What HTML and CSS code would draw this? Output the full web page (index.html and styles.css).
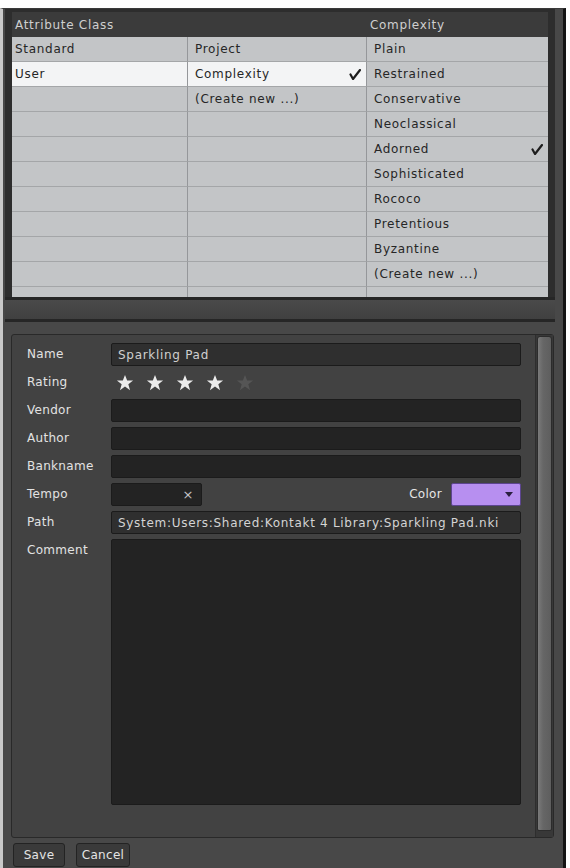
FILE: index.html
```html
<!DOCTYPE html>
<html>
<head>
<meta charset="utf-8">
<link rel="stylesheet" href="styles.css">
</head>
<body>
<div class="window">
  <div class="browser">
    <div class="bhead">
      <span class="hcell c1">Attribute Class</span>
      <span class="hcell c2"></span>
      <span class="hcell c3">Complexity</span>
    </div>
    <div class="grid">
      <div class="cell c1">Standard</div><div class="cell c2">Project</div><div class="cell c3">Plain</div>
      <div class="cell c1 sel">User</div><div class="cell c2 sel">Complexity<svg class="check" viewBox="0 0 12 11"><path d="M1.5 5.5 L4 10 L11 1"/></svg></div><div class="cell c3">Restrained</div>
      <div class="cell c1"></div><div class="cell c2">(Create new ...)</div><div class="cell c3">Conservative</div>
      <div class="cell c1"></div><div class="cell c2"></div><div class="cell c3">Neoclassical</div>
      <div class="cell c1"></div><div class="cell c2"></div><div class="cell c3">Adorned<svg class="check" viewBox="0 0 12 11"><path d="M1.5 5.5 L4 10 L11 1"/></svg></div>
      <div class="cell c1"></div><div class="cell c2"></div><div class="cell c3">Sophisticated</div>
      <div class="cell c1"></div><div class="cell c2"></div><div class="cell c3">Rococo</div>
      <div class="cell c1"></div><div class="cell c2"></div><div class="cell c3">Pretentious</div>
      <div class="cell c1"></div><div class="cell c2"></div><div class="cell c3">Byzantine</div>
      <div class="cell c1"></div><div class="cell c2"></div><div class="cell c3">(Create new ...)</div>
      <div class="cell c1"></div><div class="cell c2"></div><div class="cell c3"></div>
    </div>
    <div class="hscroll"></div>
  </div>

  <div class="panel">
    <div class="form">
      <div class="label">Name</div>
      <div class="field name">Sparkling Pad</div>

      <div class="label">Rating</div>
      <div class="stars">
        <svg class="star on" viewBox="0 0 20 20"><polygon points="10,1 12.4,7.3 19,7.3 13.7,11.4 15.6,18 10,14 4.4,18 6.3,11.4 1,7.3 7.6,7.3"/></svg>
        <svg class="star on" viewBox="0 0 20 20"><polygon points="10,1 12.4,7.3 19,7.3 13.7,11.4 15.6,18 10,14 4.4,18 6.3,11.4 1,7.3 7.6,7.3"/></svg>
        <svg class="star on" viewBox="0 0 20 20"><polygon points="10,1 12.4,7.3 19,7.3 13.7,11.4 15.6,18 10,14 4.4,18 6.3,11.4 1,7.3 7.6,7.3"/></svg>
        <svg class="star on" viewBox="0 0 20 20"><polygon points="10,1 12.4,7.3 19,7.3 13.7,11.4 15.6,18 10,14 4.4,18 6.3,11.4 1,7.3 7.6,7.3"/></svg>
        <svg class="star off" viewBox="0 0 20 20"><polygon points="10,1 12.4,7.3 19,7.3 13.7,11.4 15.6,18 10,14 4.4,18 6.3,11.4 1,7.3 7.6,7.3"/></svg>
      </div>

      <div class="label">Vendor</div>
      <div class="field"></div>

      <div class="label">Author</div>
      <div class="field"></div>

      <div class="label">Bankname</div>
      <div class="field"></div>

      <div class="label">Tempo</div>
      <div class="temporow">
        <div class="field tempo"><span class="clear">×</span></div>
        <div class="colorlabel">Color</div>
        <div class="swatch"><svg class="arrow" viewBox="0 0 8 5"><polygon points="0,0 8,0 4,5"/></svg></div>
      </div>

      <div class="label">Path</div>
      <div class="field path">System:Users:Shared:Kontakt 4 Library:Sparkling Pad.nki</div>

      <div class="label top">Comment</div>
      <div class="field comment"></div>
    </div>
    <div class="vscroll"><div class="thumb"></div></div>
  </div>

  <div class="footer">
    <button class="btn">Save</button>
    <button class="btn">Cancel</button>
  </div>
</div>
</body>
</html>
```

FILE: styles.css
```css
* { box-sizing: border-box; }

html, body {
  margin: 0;
  height: 868px;
  overflow: hidden;
}

body {
  background: #ffffff;
  padding: 8px 0 0 0;
  font-family: "DejaVu Sans", "Liberation Sans", sans-serif;
  font-size: 12px;
  letter-spacing: 0.7px;
}

.window {
  width: 566px;
  height: 860px;
  background: #484848;
  border-left: 3px solid #c9c9c9;
  border-right: 3px solid #141414;
  border-top: 1px solid #3a3a3a;
  padding: 0 8px 0 2px;
  display: flex;
  flex-direction: column;
}

.browser {
  width: 550px;
  background: #2d2d2d;
  padding: 3px 7px 0 7px;
  display: flex;
  flex-direction: column;
}

.bhead {
  height: 25px;
  display: grid;
  grid-template-columns: 176px 179px 1fr;
  align-items: center;
  background: #3b3b3b;
  color: #cfcfcf;
}

.hcell.c1 { padding-left: 3px; }
.hcell.c3 { padding-left: 3px; }

.grid {
  height: 260px;
  overflow: hidden;
  display: grid;
  grid-template-columns: 176px 179px 1fr;
  grid-auto-rows: 25px;
  background: #c3c5c7;
}

.cell {
  display: flex;
  align-items: center;
  background: #c3c5c7;
  border-bottom: 1px solid #a4a6a8;
  color: #262626;
  padding-left: 7px;
  padding-right: 5px;
  white-space: nowrap;
}

.cell.c1 { padding-left: 3px; border-right: 1px solid #95979a; }
.cell.c2 { border-right: 1px solid #95979a; }
.cell.sel { background: #f3f4f5; }

.check {
  width: 12px;
  height: 11px;
  margin-left: auto;
}
.check path {
  fill: none;
  stroke: #1e1e1e;
  stroke-width: 2.2;
  stroke-linecap: round;
  stroke-linejoin: round;
}

.hscroll {
  height: 25px;
  margin: 0 -7px;
  border-top: 3px solid #262626;
  border-bottom: 3px solid #262626;
  background: linear-gradient(#4a4a4a, #404040);
}

.panel {
  margin: 12px 1px 0 6px;
  height: 504px;
  border: 1px solid #292929;
  border-radius: 3px;
  background: #424242;
  display: flex;
}

.form {
  flex: 1;
  padding: 8px 14px 32px 15px;
  display: grid;
  grid-template-columns: 84px 1fr;
  grid-template-rows: 23px 23px 23px 23px 23px 23px 23px 1fr;
  row-gap: 5px;
}

.label {
  color: #e2e2e2;
  line-height: 23px;
  white-space: nowrap;
  letter-spacing: 0.3px;
}

.field {
  background: #232323;
  border: 1px solid #1b1b1b;
  border-radius: 2px;
  color: #cfcfcf;
  padding-left: 6px;
  display: flex;
  align-items: center;
  white-space: nowrap;
  overflow: hidden;
}

.field.name { background: #2f2f2f; }
.field.path { background: #2f2f2f; color: #d4d4d4; }

.stars {
  display: flex;
  align-items: center;
  gap: 12px;
  padding-left: 5px;
}

.star { width: 18px; height: 18px; }
.star.on polygon { fill: #ececec; }
.star.off polygon { fill: #555555; }

.temporow {
  display: flex;
  align-items: stretch;
}

.field.tempo {
  width: 91px;
  justify-content: flex-end;
  padding-right: 7px;
}

.clear {
  color: #c4c4c4;
  font-size: 13px;
}

.colorlabel {
  margin-left: auto;
  color: #e6e6e6;
  line-height: 23px;
  margin-right: 9px;
  letter-spacing: 0.3px;
}

.swatch {
  width: 70px;
  background: #b78ff0;
  border: 1px solid #5d4590;
  border-radius: 2px;
  display: flex;
  align-items: center;
  justify-content: flex-end;
  padding-right: 7px;
}

.arrow { width: 8px; height: 5px; }
.arrow polygon { fill: #2a2040; }

.label.top { align-self: start; }

.field.comment { background: #232323; }

.vscroll {
  width: 18px;
  border-left: 1px solid #2e2e2e;
  background: #383838;
  padding: 1px 1px 6px 1px;
}

.thumb {
  height: 100%;
  background: linear-gradient(90deg, #7a7a7a, #666666 40%, #5e5e5e);
  border: 1px solid #2c2c2c;
  border-radius: 3px 3px 2px 2px;
}

.footer {
  display: flex;
  gap: 11px;
  padding: 5px 0 0 8px;
}

.btn {
  font-family: "DejaVu Sans", "Liberation Sans", sans-serif;
  font-size: 12px;
  letter-spacing: 0.3px;
  color: #e4e4e4;
  background: #3a3a3a;
  border: 1px solid #232323;
  border-radius: 3px;
  height: 24px;
  padding: 0 4px;
}

.btn:first-child { width: 52px; }
.btn:last-child { width: 54px; }
```
